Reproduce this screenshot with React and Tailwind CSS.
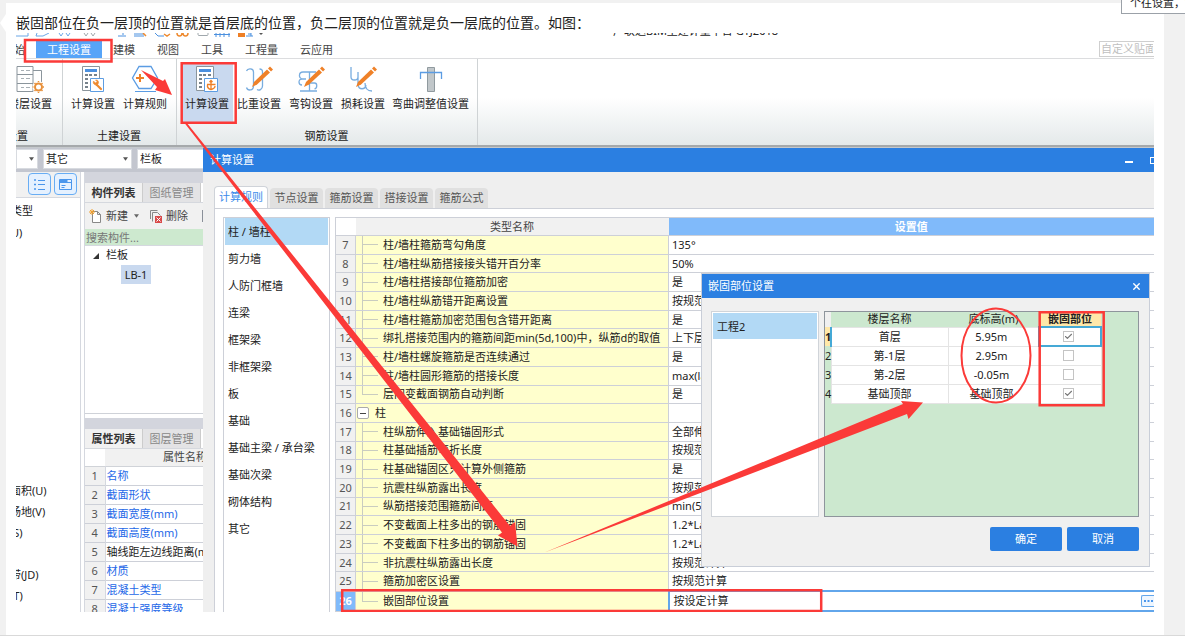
import React from "react";
import { X, Check } from "lucide-react";

const menuTabs = ["建模", "视图", "工具", "工程量", "云应用"];

const dialogTabs = ["节点设置", "箍筋设置", "搭接设置", "箍筋公式"];

const categories = [
  "柱 / 墙柱",
  "剪力墙",
  "人防门框墙",
  "连梁",
  "框架梁",
  "非框架梁",
  "板",
  "基础",
  "基础主梁 / 承台梁",
  "基础次梁",
  "砌体结构",
  "其它",
];

const rules = [
  { id: 7, name: "柱/墙柱箍筋弯勾角度", value: "135°" },
  { id: 8, name: "柱/墙柱纵筋搭接接头错开百分率", value: "50%" },
  { id: 9, name: "柱/墙柱搭接部位箍筋加密", value: "是" },
  { id: 10, name: "柱/墙柱纵筋错开距离设置", value: "按规范" },
  { id: 11, name: "柱/墙柱箍筋加密范围包含错开距离", value: "是" },
  { id: 12, name: "绑扎搭接范围内的箍筋间距min(5d,100)中，纵筋d的取值", value: "上下层" },
  { id: 13, name: "柱/墙柱螺旋箍筋是否连续通过", value: "是" },
  { id: 14, name: "柱/墙柱圆形箍筋的搭接长度", value: "max(la" },
  { id: 15, name: "层间变截面钢筋自动判断", value: "是", last: true },
  { id: 16, name: "柱", value: "", group: true },
  { id: 17, name: "柱纵筋伸入基础锚固形式", value: "全部伸" },
  { id: 18, name: "柱基础插筋弯折长度", value: "按规范" },
  { id: 19, name: "柱基础锚固区只计算外侧箍筋", value: "是" },
  { id: 20, name: "抗震柱纵筋露出长度", value: "按规范" },
  { id: 21, name: "纵筋搭接范围箍筋间距", value: "min(5" },
  { id: 22, name: "不变截面上柱多出的钢筋锚固", value: "1.2*La" },
  { id: 23, name: "不变截面下柱多出的钢筋锚固", value: "1.2*La" },
  { id: 24, name: "非抗震柱纵筋露出长度", value: "按规范计算" },
  { id: 25, name: "箍筋加密区设置", value: "按规范计算" },
  { id: 26, name: "嵌固部位设置", value: "按设定计算", last: true, active: true },
];

const properties = [
  { name: "名称", link: true },
  { name: "截面形状", link: true },
  { name: "截面宽度(mm)", link: true },
  { name: "截面高度(mm)", link: true },
  { name: "轴线距左边线距离(mm)", link: false },
  { name: "材质", link: true },
  { name: "混凝土类型", link: true },
  { name: "混凝土强度等级", link: true },
];

const floors = [
  { name: "首层", height: "5.95m", fixed: true },
  { name: "第-1层", height: "2.95m", fixed: false },
  { name: "第-2层", height: "-0.05m", fixed: false },
  { name: "基础顶部", height: "基础顶部", fixed: true },
];

const FloorIcon = () => (
  <svg width="28" height="28" viewBox="0 0 28 28" fill="none" stroke="#8b959c">
    <path d="M1 1.500h16v25H1zM1 9.500h16M1 18.500h16M17 5.500h8.500V17" />
    <path d="M5 5.500h3M10 5.500h4M5 13.500h3M10 13.500h4M5 22.500h3M10 22.500h4" stroke="#a8b0b5" />
    <circle cx="22.500" cy="22" r="6" fill="#fff" stroke="none" />
    <circle cx="22.500" cy="22" r="3.500" stroke="#e8903a" strokeWidth="2" />
    <path d="M22.500 17v-1M22.500 28v-1M17.500 22h-1M28 22h-1M18.500 18l1 1M25.500 25l1 1M26.500 18l-1 1M19.500 25l-1 1" stroke="#e8903a" strokeWidth="1.500" />
  </svg>
);

const CalculatorIcon = ({ plus }) => (
  <svg width="28" height="28" viewBox="0 0 28 28" fill="none">
    <path d="M3.500 1.500h17v24h-17z" fill="#fff" stroke="#8b959c" />
    <path d="M6 4h12v3H6z" fill="#4b90df" />
    <path d="M6 9h3v2H6zM10 9h3v2h-3zM15 9h3v2h-3zM6 13h3v2H6zM6 17h3v2H6zM6 21h3v2H6z" fill="#77828b" />
    <path d="M11.500 13.500h13v13h-13z" fill="#fff" stroke="#5d9de2" />
    {plus ? (
      <path
        d="M18 15.500v9.500M14 19.500h8.500M16.500 17l1.500-1.500 1.500 1.500M14.500 19.500c-.5 3 1.500 4.500 3.500 5 2-.5 4-1.500 4-3.500"
        stroke="#ee7f25"
        strokeWidth="1.300"
      />
    ) : (
      <g stroke="#ee8a2f">
        <path d="M17.500 19.500l4.500 4.500" strokeWidth="2.200" strokeLinecap="round" />
        <path d="M14.500 16l2 2 1.500-1.500-1.500-1.500c2-.5 3.500 1 3 3s-2.500 2.500-4 1.500-1.500-2-1-3.500z" fill="#ee8a2f" strokeWidth=".5" />
      </g>
    )}
  </svg>
);

const HexagonIcon = () => (
  <svg width="28" height="28" viewBox="0 0 28 28" fill="none">
    <path d="M8 1.500h12l6.500 11.500L20 23.500H8L1.500 13z" stroke="#5b9ce3" strokeWidth="1.300" fill="#fff" />
    <path d="M4 26.500h21" stroke="#5b9ce3" />
    <path d="M9 9v8M5 13h8" stroke="#ee7f25" strokeWidth="2" />
  </svg>
);

const rebarPaths = {
  ratio: "M1.500 6c1-3 7-3 7 1v14c0 5-6 5-7 1.500M12 24.500c2 1.500 5.500 0 5.500-3.500V7c0-2-1-3-3-3",
  hook: "M19 7H6c-4.500 0-5 7 0 7h2M9 14H5c-4 0-4 6 0 6M3 26h17M12.500 7v19M12.500 18h5c3 0 3 5 0 6",
  loss: "M2 2v10c0 4 7 4 7 0V7M9 12v8c1 5 7 5 8 0M16 18c0 5 2 8 7 8",
};

const RebarIcon = ({ kind }) => (
  <svg width="28" height="28" viewBox="0 0 28 28" fill="none">
    <path d={rebarPaths[kind]} stroke="#79addf" strokeWidth="1.300" />
    <path d="M22 4.500l3 3-13 12-5 2.500 2-5z" fill="#ef8128" />
    <path d="M23 3.500L25 1.500l3 3-2 2z" fill="#ef8128" />
  </svg>
);

const BendIcon = () => (
  <svg width="28" height="28" viewBox="0 0 28 28" fill="none">
    <path d="M10.500 2.500h7v24h-7z" fill="#c1c7ca" stroke="#909a9f" />
    <path d="M3.500 14V7.500h21V14" stroke="#5b9ce3" strokeWidth="1.300" />
  </svg>
);

const QuickIcons = () => (
  <svg width="260" height="4" viewBox="0 0 260 4" fill="none">
    <path d="M0 3h12V0M21 0l-1 3h7l6-3M43 0l2 3 2-3M50 0l2 3 2-3" stroke="#6ba6e6" />
    <path d="M68 0l2 3 2-3M75 0l2 3 2-3M182 0c0 2 0 2.500 1 2.500h8c1 0 1-.5 1-2.500" stroke="#a0a8ad" />
    <path d="M102 3h8M107 2V0M118 1h10M118 3h10M139 0l3 3h6M200 0v4M204 0v4M208 0v4M213 0v4M198 1.500h16M230 3h7M232 1h3M235 0v3" stroke="#4b90df" />
    <path d="M127 0l3 3M148 1l3 2 3-2M161 0c0 4 5 4 5 0M167 0c0 4 5 4 5 0" stroke="#ee8a2f" strokeWidth="1.500" />
    <path d="M222 0h7v4h-7z" fill="#ee7f25" />
    <path d="M243 0h4l-2 2z" fill="#555" />
  </svg>
);

const RibbonButton = ({ icon, text, active, wide }) => (
  <button
    className={`flex h-[60px] shrink-0 flex-col items-center whitespace-nowrap pt-[3px] ${
      wide ? "w-[83px]" : "w-[52px]"
    } ${active ? "bg-[#c9d9ef]" : ""}`}
  >
    {icon}
    <span className="mt-[3px] leading-4">{text}</span>
  </button>
);

const RibbonGroup = ({ title, clipped, children }) => (
  <div
    className={`flex flex-col justify-between overflow-hidden border-r border-[#cfd3d5] pt-[3px] pb-px ${
      clipped ? "w-[47px] items-end pr-1.5" : "items-center pl-1 pr-[5px]"
    }`}
  >
    <div className="flex">{children}</div>
    <span className={`whitespace-nowrap leading-4 ${clipped ? "pr-7" : ""}`}>{title}</span>
  </div>
);

const Ribbon = () => (
  <div className="flex h-[86px] bg-gradient-to-b from-white from-45% to-[#e4e9ea]">
    <RibbonGroup title="工程设置" clipped>
      <RibbonButton icon={<FloorIcon />} text="楼层设置" />
    </RibbonGroup>
    <RibbonGroup title="土建设置">
      <RibbonButton icon={<CalculatorIcon />} text="计算设置" />
      <RibbonButton icon={<HexagonIcon />} text="计算规则" />
    </RibbonGroup>
    <RibbonGroup title="钢筋设置">
      <RibbonButton icon={<CalculatorIcon plus />} text="计算设置" active />
      <RibbonButton icon={<RebarIcon kind="ratio" />} text="比重设置" />
      <RibbonButton icon={<RebarIcon kind="hook" />} text="弯钩设置" />
      <RibbonButton icon={<RebarIcon kind="loss" />} text="损耗设置" />
      <RibbonButton icon={<BendIcon />} text="弯曲调整值设置" wide />
    </RibbonGroup>
  </div>
);

const MenuBar = () => (
  <div className="flex h-[22px] items-end justify-between border-b border-[#dcdddf] text-[#444]">
    <div className="flex items-end">
      <button className="flex w-5 justify-end overflow-hidden whitespace-nowrap pr-[11px] leading-[17px]">
        开始
      </button>
      <button className="h-[17px] w-[66px] bg-[#57a4f8] leading-[17px] text-white">工程设置</button>
      {menuTabs.map((tab) => (
        <button key={tab} className="px-[11px] leading-[17px]">
          {tab}
        </button>
      ))}
    </div>
    <input
      aria-label="自定义贴面"
      placeholder="自定义贴面公式"
      className="mb-px h-[16px] w-[55px] border border-r-0 border-[#cfcfcf] px-px outline-none placeholder:text-[#bfbfbf]"
    />
  </div>
);

const DropDown = ({ label, value, className }) => (
  <div className={`relative h-5 shrink-0 bg-white ${className}`}>
    <select
      aria-label={label}
      defaultValue={value}
      className="h-full w-full appearance-none border border-[#d8dbe0] bg-white px-0.5 outline-none"
    >
      <option>{value}</option>
    </select>
    <svg className="pointer-events-none absolute right-1 top-2" width="5" height="4" viewBox="0 0 6 4">
      <path d="M0 0h6L3 4z" fill="#555" />
    </svg>
  </div>
);

const PanelTabs = ({ active, other }) => (
  <div className="flex h-5 shrink-0 border-b border-[#d5d8de] leading-[19px]">
    <button className="w-[58px] shrink-0 border-r border-[#ccc] bg-[#f1f1f1] font-bold text-[#333]">{active}</button>
    <button className="w-[58px] shrink-0 border-r border-[#ccc] bg-[#e3e3e5] text-[#888]">{other}</button>
  </div>
);

const ModuleTree = () => (
  <div className="flex w-[65px] shrink-0 flex-col justify-between overflow-hidden border-r border-[#d5d8df] bg-white pb-1.5">
    <div>
      <div className="flex h-[26px] justify-end gap-[3px] border-b border-[#d5d8df] bg-[#f1f1f1] pr-[3px] pt-px">
        <button aria-label="列表" className="grid h-[22px] w-[23px] place-items-center rounded-sm border border-[#68adf4] bg-[#e5f1ff]">
          <svg width="13" height="13" viewBox="0 0 13 13" fill="none" stroke="#4a96ec">
            <path d="M1.500 1.500h1v1h-1zM1.500 6h1v1h-1zM1.500 10.500h1v1h-1zM5 2.500h7M5 6.500h7M5 11.500h7" />
          </svg>
        </button>
        <button aria-label="窗口" className="grid h-[22px] w-[23px] place-items-center rounded-sm border border-[#68adf4] bg-[#e5f1ff]">
          <svg width="15" height="13" viewBox="0 0 15 13" fill="none" stroke="#4a96ec">
            <path d="M1.500 1.500h12v10h-12zM1.500 4.500h12M3.500 7.500h4M3.500 9.500h3" />
            <path d="M2 2h7v2H2z" fill="#4a96ec" />
          </svg>
        </button>
      </div>
      <ul className="-ml-[5px] pt-[2px] leading-[22px]">
        <li>类型</li>
        <li>U)</li>
      </ul>
    </div>
    <ul className="-ml-[6px] whitespace-nowrap leading-[21px]">
      <li>面积(U)</li>
      <li>场地(V)</li>
      <li>(S)</li>
      <li className="h-[21px]" />
      <li>带(JD)</li>
      <li>(T)</li>
    </ul>
  </div>
);

const ComponentPanel = () => (
  <div className="flex flex-1 flex-col overflow-hidden border-l border-[#d5d8df]">
    <div className="flex h-[242px] shrink-0 flex-col border-b border-[#cfd2d8]">
      <div className="h-[11px] shrink-0 bg-[#d3d5dd]" />
      <PanelTabs active="构件列表" other="图纸管理" />
      <div className="flex h-[26px] shrink-0 items-center bg-[#f1f1f1] pl-1 text-[#444]">
        <button className="flex items-center gap-1 whitespace-nowrap">
          <svg width="13" height="14" viewBox="0 0 13 14" fill="none">
            <path d="M3.500 2.500h5l3 3v8h-8zM8.500 2.500v3h3" fill="#fff" stroke="#888" />
            <path d="M3 0v6M0 3h6M1 1l4 4M5 1L1 5" stroke="#f0a030" />
          </svg>
          新建
        </button>
        <svg className="ml-1.5 shrink-0" width="5" height="4" viewBox="0 0 6 4">
          <path d="M0 0h6L3 4z" fill="#666" />
        </svg>
        <button className="ml-2.5 flex items-center gap-1 whitespace-nowrap">
          <svg width="13" height="14" viewBox="0 0 13 14" fill="none">
            <path d="M1.500 10V1.500h7M3.500 12.500v-9h5l3 3" stroke="#888" />
            <path d="M6 7h7v7H6z" fill="#d94a4a" />
            <path d="M7.500 8.500l4 4M11.500 8.500l-4 4" stroke="#fff" />
          </svg>
          删除
        </button>
        <span className="ml-3.5 h-3 w-px shrink-0 bg-[#8a9099]" />
      </div>
      <input
        aria-label="搜索构件"
        placeholder="搜索构件..."
        className="h-[17px] w-full shrink-0 border-b border-[#d5d8df] bg-[#cde9cf] px-px outline-none placeholder:text-[#777]"
      />
      <div className="flex h-[19px] items-center gap-1.5 pl-2">
        <svg width="7" height="6" viewBox="0 0 7 6">
          <path d="M6 0v6H0z" fill="#333" />
        </svg>
        栏板
      </div>
      <div className="ml-9 w-[30px] bg-[#c9d9ef] text-center leading-[19px]">LB-1</div>
    </div>
    <div className="mt-1 h-[11px] shrink-0 bg-[#d3d5dd]" />
    <PanelTabs active="属性列表" other="图层管理" />
    <table className="w-[200px] table-fixed border-collapse">
      <thead>
        <tr className="h-[17px] border-b border-[#d0d3d8] leading-4">
          <th className="w-5" />
          <th className="bg-[#f1f1f1] pr-5 font-normal text-[#444]">属性名称</th>
        </tr>
      </thead>
      <tbody>
        {properties.map((item, index) => (
          <tr key={item.name} className="h-[19px] border-b border-[#cdd0d8] leading-[18px]">
            <td className="border-r border-[#d5d8df] bg-[#f1f1f1] text-center text-[#555]">{index + 1}</td>
            <td className={`whitespace-nowrap pl-px ${item.link ? "text-[#2468e8]" : ""}`}>{item.name}</td>
          </tr>
        ))}
      </tbody>
    </table>
  </div>
);

const Workspace = () => (
  <div className="flex w-[187px] shrink-0 flex-col overflow-hidden">
    <div className="flex h-6 shrink-0 items-center gap-[5px] bg-[#c3c6cf] pb-0.5">
      <DropDown label="楼层" value="" className="w-[22px]" />
      <DropDown label="类别" value="其它" className="w-[89px]" />
      <DropDown label="构件" value="栏板" className="w-[89px]" />
    </div>
    <div className="flex min-h-0 flex-1 gap-[3px]">
      <ModuleTree />
      <ComponentPanel />
    </div>
  </div>
);

// connector lines in front of every child rule
const TreeBranch = ({ last }) => (
  <span className="flex w-[27px] shrink-0 flex-col self-stretch pl-1.5 pr-[5px]">
    <span className="flex-1 border-b border-l border-[#c9ccc0]" />
    <span className={`flex-1 ${last ? "" : "border-l border-[#c9ccc0]"}`} />
  </span>
);

const RuleTable = () => (
  <table className="h-[395px] w-full flex-1 table-fixed border-collapse border-l border-t border-[#cdd0d8]">
    <thead>
      <tr className="h-[18px] leading-4 text-[#444]">
        <th className="w-5" />
        <th className="w-[313px] bg-[#f1f1f1] font-normal">类型名称</th>
        <th className="bg-[#80bafa] font-bold text-white">设置值</th>
      </tr>
    </thead>
    <tbody>
      {rules.map((rule) => (
        <tr key={rule.id} className="leading-4">
          <td
            className={`border-y border-[#cdd0d8] p-0 text-center ${
              rule.active ? "bg-[#80bafa] font-bold text-white" : "bg-[#f1f1f1] text-[#555]"
            }`}
          >
            {rule.id}
          </td>
          <td className="h-px border border-[#cdd0d8] bg-[#ffffcd] p-0">
            <div className="flex h-full items-center whitespace-nowrap">
              {rule.group ? (
                <button aria-label="折叠" className="ml-px mr-1.5 grid h-3 w-3 place-items-center rounded-xs border border-[#aaa] bg-white">
                  <span className="h-px w-1.5 bg-[#444]" />
                </button>
              ) : (
                <TreeBranch last={rule.last} />
              )}
              {rule.name}
            </div>
          </td>
          <td className={`whitespace-nowrap p-0 ${rule.active ? "border-2 border-r-0 border-[#62a6eb] pl-1" : "border-y border-[#cdd0d8] pl-[3px]"}`}>
            <div className="flex items-center justify-between">
              {rule.value}
              {rule.active && (
                <button aria-label="更多" className="grid h-3 w-[13px] place-items-center rounded-l-xs border border-r-0 border-[#62a6eb] bg-[#eef6ff]">
                  <svg width="9" height="2" viewBox="0 0 9 2" fill="#4a96ec">
                    <path d="M0 0h2v2H0zM3.500 0h2v2h-2zM7 0h2v2H7z" />
                  </svg>
                </button>
              )}
            </div>
          </td>
        </tr>
      ))}
    </tbody>
  </table>
);

const CalcDialog = () => (
  <div className="flex min-w-0 flex-1 flex-col bg-[#efefef]">
    <div className="flex h-6 shrink-0 items-center justify-between overflow-hidden bg-[#2b7fe1] pl-[7px] text-white">
      <span>计算设置</span>
      <div className="flex items-center gap-[17px]">
        <button aria-label="最小化" className="mt-1 h-0.5 w-2 bg-white" />
        <button aria-label="最大化" className="h-[7px] w-1 border border-r-0 border-white" />
      </div>
    </div>
    <div className="flex h-9 shrink-0 items-end gap-0.5 pl-[11px]">
      <button className="h-[22px] w-[54px] rounded-t-sm border border-b-0 border-[#cfd3d9] bg-white text-[#3b8bea]">
        计算规则
      </button>
      {dialogTabs.map((tab) => (
        <button key={tab} className="h-5 w-[53px] rounded-t-sm bg-[#e0e0e0] text-[#555]">
          {tab}
        </button>
      ))}
    </div>
    <div className="ml-[11px] flex flex-1 gap-[5px] border-l border-t border-[#cdd0d8] bg-white pl-2 pt-2">
      <ul className="w-[107px] shrink-0 border border-b-0 border-[#cdd0d8]">
        {categories.map((item, index) => (
          <li key={item} className={`mx-px h-[27px] whitespace-nowrap pl-[3px] leading-[27px] ${index === 0 ? "bg-[#b2d9f5]" : ""}`}>
            {item}
          </li>
        ))}
      </ul>
      <RuleTable />
    </div>
  </div>
);

const FixedPartDialog = () => (
  <div className="absolute left-[685px] top-[240px] w-[449px] border border-[#c9ced8] bg-[#f0f0f0]">
    <div className="flex h-6 items-center justify-between bg-[#2b7fe1] pl-1.5 pr-[7px] text-white">
      <span>嵌固部位设置</span>
      <button aria-label="关闭">
        <X size={11} strokeWidth={3} />
      </button>
    </div>
    <div className="flex gap-[5px] pl-[9px] pr-2.5 pt-[13px]">
      <div className="h-[206px] w-[108px] shrink-0 border border-[#d0d4d9] bg-white p-px">
        <div className="h-[26px] bg-[#b2d9f5] pl-1 leading-7">工程2</div>
      </div>
      <div className="flex-1 border border-[#8e959c] bg-[#cce8cf]">
        <table className="w-[277px] table-fixed border-collapse text-center">
          <thead>
            <tr className="h-[15px] leading-[14px]">
              <th className="w-1.5 bg-[#f0f0f0]" />
              <th className="w-[117px] font-normal">楼层名称</th>
              <th className="font-normal">底标高(m)</th>
              <th className="w-[62px] bg-[#ffe8a9] font-bold">嵌固部位</th>
            </tr>
          </thead>
          <tbody>
            {floors.map((floor, index) => (
              <tr key={floor.name} className="h-[19px] leading-[17px]">
                <td className={`p-0 ${index === 0 ? "border-r-2 border-[#45a9d6] bg-[#ffe8a9] font-bold" : ""}`}>{index + 1}</td>
                <td className="border border-[#e4e4e4] bg-white p-0">{floor.name}</td>
                <td className="border border-[#e4e4e4] bg-white p-0 pr-1">{floor.height}</td>
                <td className={`bg-white p-0 pr-1 ${index === 0 ? "border-2 border-[#45a9d6]" : "border border-[#e4e4e4]"}`}>
                  <label className="mx-auto grid h-[11px] w-[11px] place-items-center">
                    <input
                      type="checkbox"
                      aria-label={floor.name}
                      defaultChecked={floor.fixed}
                      className="peer col-start-1 row-start-1 h-[11px] w-[11px] appearance-none border border-[#c4c4c4] bg-white"
                    />
                    <Check
                      size={9}
                      strokeWidth={3}
                      color="#777"
                      className="pointer-events-none invisible col-start-1 row-start-1 peer-checked:visible"
                    />
                  </label>
                </td>
              </tr>
            ))}
          </tbody>
        </table>
      </div>
    </div>
    <div className="flex justify-end gap-[5px] px-2.5 pb-[15px] pt-2.5 text-white">
      <button className="h-6 w-[72px] rounded-xs bg-[#2b7fe1]">确定</button>
      <button className="h-6 w-[72px] rounded-xs bg-[#2b7fe1]">取消</button>
    </div>
  </div>
);

const Annotations = () => (
  <svg className="pointer-events-none absolute left-0 top-0" width="1138" height="579" viewBox="16 33 1138 579">
    <g fill="none" stroke="#fb3a38" strokeWidth="2.500">
      <path d="M25 40h86.500v21.500H25zM181.700 63.200h54v59.500h-54zM342.200 590.200h479v20.800h-479zM1039.700 312.200h64v93h-64z" />
      <ellipse cx="996" cy="355.500" rx="34.500" ry="47" strokeWidth="2" />
    </g>
    <g fill="#fb3a38">
      <path d="M141 70l22 11 2-2 7 16-17-5 2-3z" />
      <path d="M184.500 123l2-.5L510 526l5-4 2.500 24.500-19.500-11 4-3z" />
      <path d="M544.500 552.500L903 404l-2-3 22 1.500-14.500 16.500-1.500-5z" />
    </g>
  </svg>
);

const App = () => {
  return (
    <div className="min-h-screen bg-white font-['Noto_Sans','Noto_Sans_CJK_SC',sans-serif] text-[11px] text-[#222]">
      <div className="relative overflow-hidden border-b border-[#d9d9d9] bg-[#f1f1f1] pl-1.5 pr-[21px] pt-[3px]">
        <svg className="absolute left-0 top-3.5" width="6" height="18" viewBox="0 0 6 18">
          <path d="M6 0L0 9l6 9z" fill="#fff" />
        </svg>
        <div className="bg-white px-2.5 pb-[23px]">
          <p className="h-[30px] whitespace-nowrap pt-[9px] text-sm leading-[22px]">
            嵌固部位在负一层顶的位置就是首层底的位置，负二层顶的位置就是负一层底的位置。如图：
          </p>
          <div className="relative overflow-hidden">
            <div className="flex h-1 items-start overflow-hidden">
              <QuickIcons />
              <span className="ml-[337px] flex h-1 items-end whitespace-nowrap leading-[13px]">广联达BIM土建计量平台 GTJ2018</span>
            </div>
            <MenuBar />
            <Ribbon />
            <div className="h-[3px] border-b border-[#c5c9cc] bg-[#a5a9ab]" />
            <div className="flex h-[464px] overflow-hidden">
              <Workspace />
              <CalcDialog />
            </div>
            <FixedPartDialog />
            <Annotations />
          </div>
        </div>
        <div className="absolute -top-2 right-0 w-16 overflow-hidden whitespace-nowrap border border-r-0 border-[#9ba1a8] bg-white pl-2 leading-5">
          个往设置，设置
        </div>
      </div>
    </div>
  );
};

export default App;
